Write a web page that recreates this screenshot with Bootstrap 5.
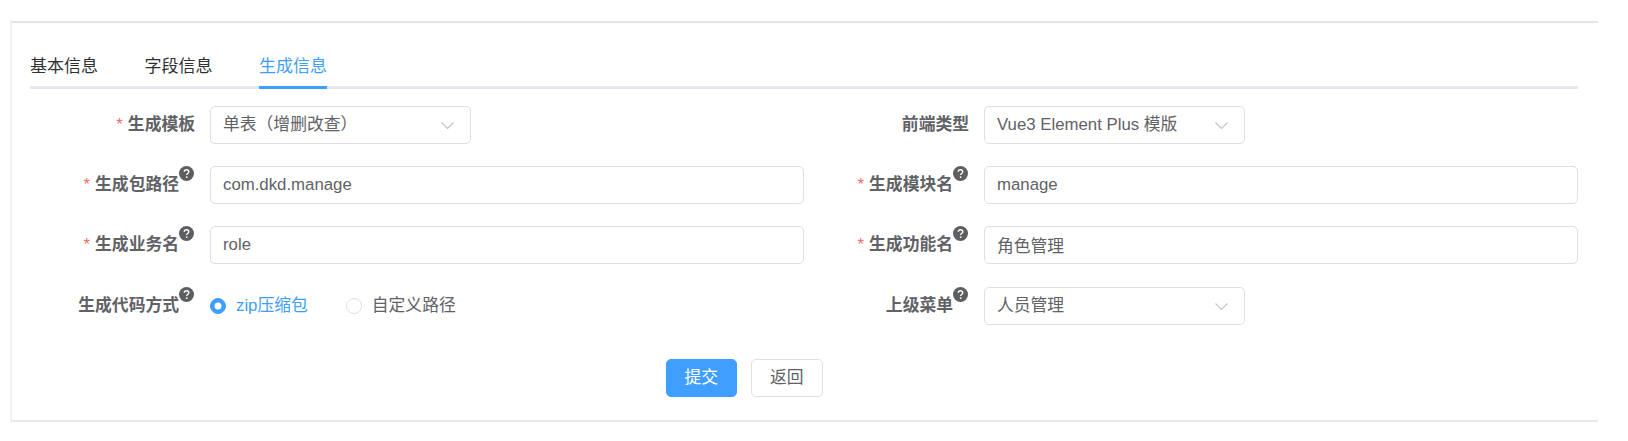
<!DOCTYPE html>
<html lang="zh-CN">
<head>
<meta charset="utf-8">
<title>生成信息</title>
<link href="https://cdn.jsdelivr.net/npm/bootstrap@5.3.0/dist/css/bootstrap.min.css" rel="stylesheet">
<style>
html, body { background: #fff; }
body { font-family: "Liberation Sans", "Noto Sans CJK SC", sans-serif; font-size: 16.8px; color: #606266; padding: 21px 30px 19px 10px; }
.gen-panel { border-top: 2px solid #e2e5ec; border-bottom: 2px solid #e8eaef; border-left: 2px solid #f0f1f4; padding: 0 20px 0 18px; height: 401px; }
.gen-tabs { border-bottom: 3px solid #e4e7ed; padding-top: 22px; gap: 46.5px; margin-bottom: 17px; }
.gen-tab { color: #303133; font-size: 17px; line-height: 24px; padding: 10px 0 7px; margin-bottom: -3px; text-decoration: none; border-bottom: 3px solid transparent; }
.gen-tab.active { color: #409eff; border-bottom-color: #409eff; }
.gen-row { margin-bottom: 22px; min-height: 38px; }
.gen-row:nth-child(3) { margin-bottom: 23px; }
.gen-label { width: 180px; padding-right: 15px; font-weight: 700; color: #606266; white-space: nowrap; }
.gen-star { color: #f56c6c; font-weight: 400; margin-right: 5px; }
.gen-help { width: 15px; height: 15px; flex: none; align-self: flex-start; margin-top: -6px; margin-right: 1px; margin-left: 0; }
.gen-control, .gen-select { height: 38px; font-size: 16.8px; color: #606266; border: 1px solid #dcdfe6; border-radius: 5px; padding: 0 14px 0 12px; box-shadow: none; }
.gen-select { width: 261px; flex: none; background-size: 15px 9px; background-position: right 15px center; padding-right: 40px; background-image: url("data:image/svg+xml,%3Csvg xmlns='http://www.w3.org/2000/svg' viewBox='0 0 15 9'%3E%3Cpath d='M1.5 1.5 7.5 7.5 13.5 1.5' fill='none' stroke='%23c0c4cc' stroke-width='1.2'/%3E%3C/svg%3E"); }
.gen-radio { gap: 10px; margin-right: 38px; }
.gen-radio .form-check-input { width: 16px; height: 16px; margin: 0; border-color: #dcdfe6; flex: none; }
.gen-radio .form-check-input:checked { background-color: #409eff; border-color: #409eff; }
.gen-radio.is-on { color: #409eff; }
.gen-actions { gap: 14px; margin-top: 34px; padding-right: 120px; }
.gen-btn { width: 71.5px; height: 38px; padding: 0; font-size: 16.8px; border-radius: 5px; }
.gen-btn-primary { background: #409eff; border-color: #409eff; color: #fff; }
.gen-btn-plain { background: #fff; border-color: #dcdfe6; color: #606266; }
</style>
</head>
<body>
<svg width="0" height="0" class="d-block" aria-hidden="true">
  <symbol id="help" viewBox="0 0 16 16">
    <circle cx="8" cy="8" r="8" fill="#5d5e60"/>
    <path d="M5.6 6.2C5.7 4.8 6.7 4 8 4c1.4 0 2.4.8 2.4 2 0 1-.6 1.5-1.3 2-.6.4-.9.7-.9 1.5" fill="none" stroke="#fff" stroke-width="1.5"/>
    <circle cx="8.2" cy="11.8" r="1" fill="#fff"/>
  </symbol>
</svg>
<div class="gen-panel">
  <nav class="nav gen-tabs">
    <a class="gen-tab" href="#">基本信息</a>
    <a class="gen-tab" href="#">字段信息</a>
    <a class="gen-tab active" href="#">生成信息</a>
  </nav>
  <form>
    <div class="row g-0 gen-row">
      <div class="col-6 d-flex align-items-center">
        <label class="gen-label d-flex justify-content-end align-items-center"><span class="gen-star">*</span>生成模板</label>
        <select class="form-select gen-select"><option>单表（增删改查）</option></select>
      </div>
      <div class="col-6 d-flex align-items-center">
        <label class="gen-label d-flex justify-content-end align-items-center">前端类型</label>
        <select class="form-select gen-select"><option>Vue3 Element Plus 模版</option></select>
      </div>
    </div>
    <div class="row g-0 gen-row">
      <div class="col-6 d-flex align-items-center">
        <label class="gen-label d-flex justify-content-end align-items-center"><span class="gen-star">*</span>生成包路径<svg class="gen-help"><use href="#help"/></svg></label>
        <input class="form-control gen-control flex-grow-1 w-auto" value="com.dkd.manage">
      </div>
      <div class="col-6 d-flex align-items-center">
        <label class="gen-label d-flex justify-content-end align-items-center"><span class="gen-star">*</span>生成模块名<svg class="gen-help"><use href="#help"/></svg></label>
        <input class="form-control gen-control flex-grow-1 w-auto" value="manage">
      </div>
    </div>
    <div class="row g-0 gen-row">
      <div class="col-6 d-flex align-items-center">
        <label class="gen-label d-flex justify-content-end align-items-center"><span class="gen-star">*</span>生成业务名<svg class="gen-help"><use href="#help"/></svg></label>
        <input class="form-control gen-control flex-grow-1 w-auto" value="role">
      </div>
      <div class="col-6 d-flex align-items-center">
        <label class="gen-label d-flex justify-content-end align-items-center"><span class="gen-star">*</span>生成功能名<svg class="gen-help"><use href="#help"/></svg></label>
        <input class="form-control gen-control flex-grow-1 w-auto" value="角色管理">
      </div>
    </div>
    <div class="row g-0 gen-row">
      <div class="col-6 d-flex align-items-center">
        <label class="gen-label d-flex justify-content-end align-items-center">生成代码方式<svg class="gen-help"><use href="#help"/></svg></label>
        <div class="d-flex align-items-center">
          <label class="gen-radio is-on d-flex align-items-center"><input class="form-check-input" type="radio" name="genway" checked>zip压缩包</label>
          <label class="gen-radio d-flex align-items-center"><input class="form-check-input" type="radio" name="genway">自定义路径</label>
        </div>
      </div>
      <div class="col-6 d-flex align-items-center">
        <label class="gen-label d-flex justify-content-end align-items-center">上级菜单<svg class="gen-help"><use href="#help"/></svg></label>
        <select class="form-select gen-select"><option>人员管理</option></select>
      </div>
    </div>
    <div class="d-flex justify-content-center gen-actions">
      <button type="button" class="btn gen-btn gen-btn-primary">提交</button>
      <button type="button" class="btn gen-btn gen-btn-plain">返回</button>
    </div>
  </form>
</div>
<script src="https://cdn.jsdelivr.net/npm/bootstrap@5.3.0/dist/js/bootstrap.bundle.min.js"></script>
</body>
</html>
